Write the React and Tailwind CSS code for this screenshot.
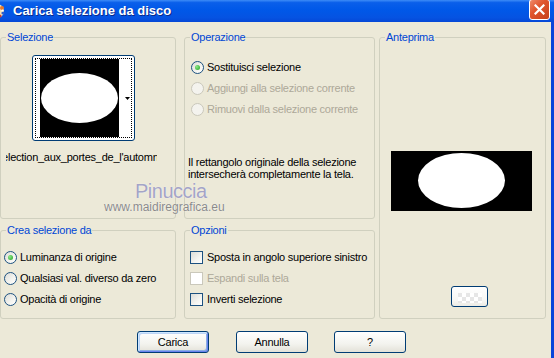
import React from "react";

function Radio({ checked, disabled }) {
  return (
    <span
      className={
        disabled
          ? "w-[13px] h-[13px] rounded-full border border-[#CAC8BB] bg-[#F4F3EE] shrink-0 flex items-center justify-center"
          : "w-[13px] h-[13px] rounded-full border border-[#1C5180] bg-[linear-gradient(135deg,#dcdcd7_0%,#f4f4f0_60%,#ffffff_100%)] shrink-0 flex items-center justify-center"
      }
    >
      {checked && (
        <span className="w-[5px] h-[5px] rounded-full bg-[radial-gradient(circle_at_35%_35%,#8ce888,#21a121)]" />
      )}
    </span>
  );
}

function Check({ disabled }) {
  return (
    <span
      className={
        disabled
          ? "w-[13px] h-[13px] border border-[#CAC8BB] bg-white shrink-0"
          : "w-[13px] h-[13px] border border-[#1C5180] bg-[linear-gradient(135deg,#dcdcd7_0%,#f4f4f0_60%,#ffffff_100%)] shrink-0"
      }
    />
  );
}

function Group({ label, className, children }) {
  return (
    <fieldset className={"border border-[#D0D0BF] rounded-[3px] min-w-0 " + className}>
      <legend className="ml-[5px] px-[1px] leading-[13px] text-[#0046D5]">{label}</legend>
      {children}
    </fieldset>
  );
}

function XPButton({ children, def }) {
  return (
    <div
      className={
        def
          ? "w-[72px] h-[22px] rounded-[3px] border border-[#003C74] bg-[linear-gradient(180deg,#ffffff_0%,#f3f3ee_60%,#e3e1d8_100%)] shadow-[inset_1px_1px_0_#cee7ff,inset_-1px_-1px_0_#6982ee,inset_2px_2px_0_#bcd4f6,inset_-2px_-2px_0_#89ade4] flex items-center justify-center leading-none"
          : "w-[72px] h-[22px] rounded-[3px] border border-[#003C74] bg-[linear-gradient(180deg,#ffffff_0%,#f3f3ee_60%,#e3e1d8_100%)] flex items-center justify-center leading-none"
      }
    >
      {children}
    </div>
  );
}

export default function App() {
  return (
    <div className="relative w-[554px] h-[358px] overflow-hidden bg-[#ECE9D8] flex flex-col font-['Liberation_Sans',Arial,sans-serif] text-[11px] text-black tracking-[-0.25px]">
      {/* Title bar */}
      <div className="h-[22px] shrink-0 flex items-center bg-[linear-gradient(180deg,#3d8cf7_0%,#0a5fea_12%,#0058e8_45%,#0553e2_80%,#0548d6_100%)]">
        <svg className="-ml-[11px] shrink-0" width="16" height="16" viewBox="0 0 16 16">
          <circle cx="8" cy="8" r="7" fill="#f3e3b8" />
          <circle cx="13" cy="5" r="2" fill="#e8782a" />
          <circle cx="14" cy="10" r="1.6" fill="#2d5fd0" />
          <circle cx="11" cy="13" r="1.6" fill="#d03a2a" />
          <circle cx="13.5" cy="7.5" r="1" fill="#ffffff" />
        </svg>
        <span className="ml-[8px] text-white font-bold text-[13px] tracking-normal [text-shadow:1px_1px_0_#0b2a8a]">
          Carica selezione da disco
        </span>
        <div className="flex-1" />
        <div className="self-start -mt-[1px] mr-[4px] w-[21px] h-[21px] rounded-[3px] border border-white bg-[linear-gradient(135deg,#ef8a6a_0%,#e0552e_40%,#c6401a_100%)] flex items-center justify-center">
          <svg width="11" height="11" viewBox="0 0 11 11">
            <path d="M1.5 1.5L9.5 9.5M9.5 1.5L1.5 9.5" stroke="white" strokeWidth="2.2" strokeLinecap="square" />
          </svg>
        </div>
      </div>

      {/* Body */}
      <div className="flex-1 flex">
        <div className="flex-1 flex flex-col pt-[9px]">
          <div className="flex">
            {/* Column 1 */}
            <div className="w-[176px] flex flex-col gap-[5px]">
              <Group label="Selezione" className="h-[188px]">
                <div className="mt-[11px] ml-[31px] w-[103px] h-[86px] rounded-[3px] border border-[#003C74] bg-white p-[2px]">
                  <div className="w-full h-full border border-dotted border-black flex items-stretch pl-[4px]">
                    <svg width="79" height="78" viewBox="0 0 79 78" className="shrink-0">
                      <rect width="79" height="78" fill="#000" />
                      <ellipse cx="39.5" cy="39" rx="38.5" ry="25" fill="#fff" />
                    </svg>
                    <div className="flex-1 flex items-center pl-[6px]">
                      <svg width="5" height="3" viewBox="0 0 5 3">
                        <path d="M0 0H5L2.5 3Z" fill="#000" />
                      </svg>
                    </div>
                  </div>
                </div>
                <div className="mt-[10px] ml-[5px] w-[151px] overflow-hidden whitespace-nowrap leading-[13px]">
                  <span className="inline-block -ml-[11px]">Selection_aux_portes_de_l'automne</span>
                </div>
              </Group>
              <Group label="Crea selezione da" className="h-[95px]">
                <div className="mt-[13px] ml-[3px] flex flex-col gap-[7px]">
                  <div className="h-[14px] flex items-center gap-[3px]">
                    <Radio checked />
                    <span>Luminanza di origine</span>
                  </div>
                  <div className="h-[14px] flex items-center gap-[3px]">
                    <Radio />
                    <span>Qualsiasi val. diverso da zero</span>
                  </div>
                  <div className="h-[14px] flex items-center gap-[3px]">
                    <Radio />
                    <span>Opacità di origine</span>
                  </div>
                </div>
              </Group>
            </div>

            {/* Column 2 */}
            <div className="ml-[8px] w-[191px] flex flex-col gap-[5px]">
              <Group label="Operazione" className="h-[188px]">
                <div className="mt-[16px] ml-[6px] flex flex-col gap-[7px]">
                  <div className="h-[14px] flex items-center gap-[3px]">
                    <Radio checked />
                    <span>Sostituisci selezione</span>
                  </div>
                  <div className="h-[14px] flex items-center gap-[3px] text-[#ACA899]">
                    <Radio disabled />
                    <span>Aggiungi alla selezione corrente</span>
                  </div>
                  <div className="h-[14px] flex items-center gap-[3px] text-[#ACA899]">
                    <Radio disabled />
                    <span>Rimuovi dalla selezione corrente</span>
                  </div>
                </div>
                <p className="mt-[40px] ml-[3px] leading-[12px]">
                  Il rettangolo originale della selezione
                  <br />
                  intersecherà completamente la tela.
                </p>
              </Group>
              <Group label="Opzioni" className="h-[95px]">
                <div className="mt-[13px] ml-[5px] flex flex-col gap-[7px]">
                  <div className="h-[14px] flex items-center gap-[4px]">
                    <Check />
                    <span>Sposta in angolo superiore sinistro</span>
                  </div>
                  <div className="h-[14px] flex items-center gap-[4px] text-[#ACA899]">
                    <Check disabled />
                    <span>Espandi sulla tela</span>
                  </div>
                  <div className="h-[14px] flex items-center gap-[4px]">
                    <Check />
                    <span>Inverti selezione</span>
                  </div>
                </div>
              </Group>
            </div>

            {/* Column 3 */}
            <div className="ml-[4px] w-[167px]">
              <Group label="Anteprima" className="h-[288px]">
                <svg width="141" height="60" viewBox="0 0 141 60" className="block mt-[107px] ml-[11px]">
                  <rect width="141" height="60" fill="#000" />
                  <ellipse cx="70.5" cy="29.5" rx="43.5" ry="27.5" fill="#fff" />
                </svg>
                <div className="mt-[75px] ml-[71px] w-[37px] h-[21px] rounded-[3px] border border-[#003C74] bg-[linear-gradient(180deg,#ffffff_0%,#f7f7f4_70%,#ecebe4_100%)] flex items-end justify-center pb-[3px]">
                  <div className="w-[24px] h-[10px] bg-[repeating-conic-gradient(#ffffff_0_25%,#e6e6e6_0_50%)] bg-[length:8px_8px]" />
                </div>
              </Group>
            </div>
          </div>

          {/* Buttons */}
          <div className="mt-[12px] flex">
            <div className="ml-[137px]">
              <XPButton def>Carica</XPButton>
            </div>
            <div className="ml-[27px]">
              <XPButton>Annulla</XPButton>
            </div>
            <div className="ml-[26px]">
              <XPButton>?</XPButton>
            </div>
          </div>
        </div>
        <div className="w-[3px] bg-[#0b45da]" />
      </div>

      {/* Watermark overlay */}
      <div className="absolute left-[135px] top-[181px] text-[20px] leading-[20px] tracking-[-0.5px] text-[#a4a4c6] [text-shadow:0_0_1px_#ffffff] pointer-events-none">
        Pinuccia
      </div>
      <div className="absolute left-[104px] top-[201px] text-[12px] leading-[12px] tracking-normal text-[#8a8a8a] [text-shadow:0_0_1px_#ffffff] pointer-events-none">
        www.maidiregrafica.eu
      </div>
    </div>
  );
}
